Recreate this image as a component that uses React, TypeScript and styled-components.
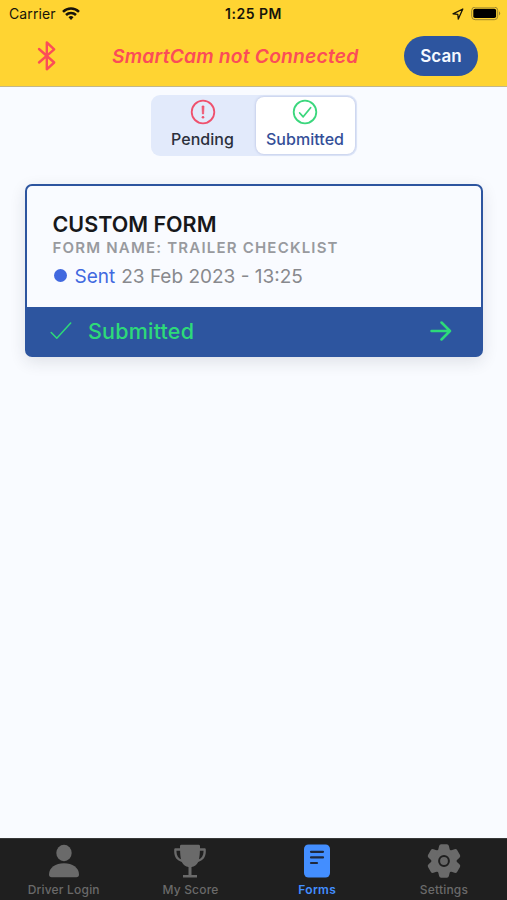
import React from 'react';
import styled, { createGlobalStyle } from 'styled-components';

const GlobalStyle = createGlobalStyle`
  * { box-sizing: border-box; }
  body { margin: 0; background: #f9fbff; font-family: Inter, sans-serif; }
  svg { display: block; flex: none; }
`;

const Screen = styled.div`
  display: flex;
  flex-direction: column;
  width: 507px;
  height: 900px;
  background: #f9fbff;
  overflow: hidden;
`;

const Header = styled.header`
  height: 87px;
  background: #ffd432;
  border-bottom: 1px solid #c3b78a;
`;

const StatusBar = styled.div`
  display: grid;
  grid-template-columns: 1fr auto 1fr;
  align-items: center;
  height: 27px;
  padding: 0 6px 0 9px;
  color: #17140a;
  font-size: 14px;
  line-height: 27px;
`;

const Carrier = styled.div`
  display: flex;
  align-items: center;
  gap: 6px;
  letter-spacing: 0.1px;
`;

const Clock = styled.div`
  margin-left: -3px;
  font-weight: 600;
  font-size: 14px;
  letter-spacing: 0.5px;
`;

const StatusIcons = styled.div`
  display: flex;
  align-items: center;
  justify-content: flex-end;
  gap: 7px;
`;

const Toolbar = styled.div`
  display: flex;
  align-items: center;
  height: 58px;
  padding: 0 29px 0 36px;
`;

const ConnectionText = styled.div`
  flex: 1;
  padding-left: 54px;
  color: #fb4d58;
  font-size: 19.3px;
  font-style: italic;
  font-weight: 600;
  letter-spacing: 0.18px;
  white-space: nowrap;
`;

const ScanButton = styled.button`
  width: 74px;
  height: 40px;
  padding: 0;
  border: 0;
  border-radius: 20px;
  background: #2d559f;
  color: #f5f9ff;
  font: 600 17px Inter, sans-serif;
  letter-spacing: 0.1px;
`;

const Content = styled.main`
  display: flex;
  flex: 1;
  flex-direction: column;
  align-items: center;
  padding-top: 8px;
`;

const Segments = styled.div`
  display: grid;
  grid-template-columns: 102px 99px;
  gap: 2px;
  width: 206px;
  height: 61px;
  padding: 2px 2px 2px 1px;
  border-radius: 9px;
  background: #e2eafb;
`;

const Segment = styled.button<{ $selected?: boolean }>`
  display: flex;
  flex-direction: column;
  align-items: center;
  padding: 2px 0 0;
  border: 0;
  border-radius: 8px;
  background: ${({ $selected }) => ($selected ? '#ffffff' : 'transparent')};
  box-shadow: ${({ $selected }) => ($selected ? '0 0 3px #aeb7dc' : 'none')};
  color: ${({ $selected }) => ($selected ? '#344f98' : '#2b303b')};
  font: 500 16px/20px Inter, sans-serif;
  letter-spacing: 0.05px;
  gap: 4px;
`;

const Card = styled.article`
  width: 458px;
  height: 173px;
  margin: 28px 0 0 1px;
  border: 2px solid #2d559f;
  border-radius: 7px;
  background: #f9fbff;
  box-shadow: 0 5px 16px rgba(35, 40, 55, 0.12);
`;

const CardBody = styled.div`
  height: 121px;
  padding: 25px 26px 0 25.5px;
`;

const CardTitle = styled.h2`
  margin: 0;
  color: #17181b;
  font-size: 21.5px;
  font-weight: 600;
  line-height: 27px;
`;

const FormName = styled.div`
  color: #989a9e;
  font-size: 15px;
  font-weight: 600;
  line-height: 19px;
  letter-spacing: 1.2px;
`;

const SentRow = styled.div`
  display: flex;
  align-items: center;
  margin-top: 6px;
  color: #88898d;
  font-size: 19px;
  line-height: 27px;
`;

const Dot = styled.span`
  width: 13px;
  height: 13px;
  margin: -2px 8px 0 1px;
  border-radius: 50%;
  background: #4169df;
`;

const Sent = styled.span`
  margin-right: 6px;
  color: #4169df;
`;

const CardFooter = styled.div`
  display: flex;
  align-items: center;
  height: 48px;
  padding: 0 29px 0 23px;
  background: #2d559f;
  color: #2dda79;
`;

const FooterLabel = styled.span`
  flex: 1;
  padding-left: 16px;
  font-size: 21.5px;
  font-weight: 550;
  letter-spacing: 0.2px;
`;

const TabBar = styled.nav`
  display: grid;
  grid-template-columns: repeat(4, 1fr);
  height: 62px;
  border-top: 1px solid #383838;
  background: #1f1f1f;
`;

const Tab = styled.button<{ $active?: boolean }>`
  display: flex;
  flex-direction: column;
  align-items: center;
  padding: 4px 0 0 0.7px;
  border: 0;
  background: transparent;
  color: ${({ $active }) => ($active ? '#438eff' : '#6a6a6a')};
  font: ${({ $active }) => ($active ? 600 : 500)} 12px/16px Inter, sans-serif;
  letter-spacing: ${({ $active }) => ($active ? '0.3px' : '0.2px')};
  gap: 3px;
`;

const WifiIcon = () => (
  <svg width="18" height="14" viewBox="0 0 18 14" fill="none" stroke="currentColor" strokeWidth="2.5">
    <path d="M1 4.8C5.5.4 12.5.4 17 4.8" />
    <path d="M4 8C6.8 5.2 11.2 5.2 14 8" />
    <path d="M6.5 10.2Q9 8 11.5 10.2L9 13Z" fill="currentColor" stroke="none" />
  </svg>
);

const LocationIcon = () => (
  <svg width="12" height="12" viewBox="0 0 12 12" fill="none" stroke="currentColor" strokeWidth="1.3" strokeLinejoin="round">
    <path d="M10.8 1L1 5.8l4.8.5.5 4.8Z" />
  </svg>
);

const BatteryIcon = () => (
  <svg width="30" height="14" viewBox="0 0 30 14">
    <rect x=".7" y=".1" width="26" height="12.6" rx="3.4" fill="none" stroke="#9b8532" />
    <rect x="2.3" y="1.7" width="22.8" height="9.4" rx="1.8" fill="#000" />
    <path d="M28 4.3q2.4 2.1 0 4.2z" fill="#9b8532" />
  </svg>
);

const BluetoothIcon = () => (
  <svg width="22" height="32" viewBox="0 0 22 32" fill="none" stroke="#fb4d58" strokeWidth="2.4" strokeLinecap="round" strokeLinejoin="round">
    <path d="M3 9l15.2 13.5-7.4 6.8V2.5l7.4 6.8L3 22.5" />
  </svg>
);

const AlertIcon = () => (
  <svg width="26" height="26" viewBox="0 0 26 26" fill="none" stroke="#ef516d" strokeWidth="1.8">
    <circle cx="13" cy="13" r="11.3" />
    <path d="M12 7h2l-.4 8h-1.2z" fill="#ef516d" strokeWidth=".7" />
    <circle cx="13" cy="18.3" r="1.3" fill="#ef516d" stroke="none" />
  </svg>
);

const CheckCircleIcon = () => (
  <svg width="26" height="26" viewBox="0 0 26 26" fill="none" stroke="#3bd77d" strokeWidth="1.8" strokeLinecap="round" strokeLinejoin="round">
    <circle cx="13" cy="13" r="11.3" />
    <path d="M7.7 14l3.5 3.8 7.4-9" />
  </svg>
);

const CheckIcon = () => (
  <svg width="22" height="18" viewBox="0 0 22 18" fill="none" stroke="currentColor" strokeWidth="1.5" strokeLinecap="round" strokeLinejoin="round">
    <path d="M1.2 10.5l5.6 5.7L20.7 1" />
  </svg>
);

const ArrowIcon = () => (
  <svg width="22" height="20" viewBox="0 0 22 20" fill="none" stroke="currentColor" strokeWidth="2.5" strokeLinecap="round" strokeLinejoin="round">
    <path d="M1.5 10H20M11.5 1.5L20 10l-8.5 8.5" />
  </svg>
);

const PersonIcon = () => (
  <svg width="34" height="36" viewBox="0 0 34 36" fill="currentColor">
    <ellipse cx="17" cy="10" rx="7.7" ry="8.3" />
    <path d="M2 31.5C2 24.8 8.6 20.3 17 20.3s15 4.5 15 11.2c0 1.8-.9 2.7-2.7 2.7H4.7C2.9 34.2 2 33.3 2 31.5Z" />
  </svg>
);

const TrophyIcon = () => (
  <svg width="34" height="36" viewBox="0 0 34 36">
    <path d="M7 3.2Q7 1.8 8.4 1.8h17.2Q27 1.8 27 3.2v2h4.6q1.2 0 1.2 1.2v2.4c0 5.1-3 9.2-7.6 10.1-1.5 2.9-3.8 4.6-6.7 5.2V32H24v2.4H10V32h5.5v-7.9c-2.9-.6-5.2-2.3-6.7-5.2C4.2 18 1.2 13.9 1.2 8.8V6.4q0-1.2 1.2-1.2H7Z" fill="currentColor" />
    <path d="M3.5 7.7h3.6c.1 3 .3 6.2 1 8.6-2.8-1-4.6-3.8-4.6-7.5ZM26.9 7.7h3.6v1.1c0 3.7-1.8 6.5-4.6 7.5.7-2.4.9-5.6 1-8.6Z" fill="#1f1f1f" />
  </svg>
);

const FormIcon = () => (
  <svg width="34" height="36" viewBox="0 0 34 36">
    <rect x="4" y="1.5" width="26" height="33" rx="4.5" fill="currentColor" />
    <path d="M11 8.8h12M11 14.4h12M11 20h6" stroke="#1f293d" strokeWidth="2.2" strokeLinecap="round" />
  </svg>
);

const GearIcon = () => (
  <svg width="34" height="36" viewBox="0 0 34 36">
    <g fill="currentColor" transform="translate(17 18)">
      <circle r="12.6" />
      {[0, 60, 120, 180, 240, 300].map((angle) => (
        <path key={angle} transform={`rotate(${angle})`} d="M-6.2-9.5L-4.9-15q.4-1.8 2-1.8h5.8q1.6 0 2 1.8L6.2-9.5Z" />
      ))}
    </g>
    <circle cx="17" cy="18" r="4.9" fill="#666" stroke="#1f1f1f" strokeWidth="2" />
  </svg>
);

export default function App() {
  return (
    <>
      <GlobalStyle />
      <Screen>
        <Header>
          <StatusBar>
            <Carrier>Carrier <WifiIcon /></Carrier>
            <Clock>1:25 PM</Clock>
            <StatusIcons><LocationIcon /><BatteryIcon /></StatusIcons>
          </StatusBar>
          <Toolbar>
            <BluetoothIcon />
            <ConnectionText>SmartCam not Connected</ConnectionText>
            <ScanButton>Scan</ScanButton>
          </Toolbar>
        </Header>
        <Content>
          <Segments>
            <Segment><AlertIcon />Pending</Segment>
            <Segment $selected><CheckCircleIcon />Submitted</Segment>
          </Segments>
          <Card>
            <CardBody>
              <CardTitle>CUSTOM FORM</CardTitle>
              <FormName>FORM NAME: TRAILER CHECKLIST</FormName>
              <SentRow><Dot /><Sent>Sent</Sent>23 Feb 2023 - 13:25</SentRow>
            </CardBody>
            <CardFooter>
              <CheckIcon /><FooterLabel>Submitted</FooterLabel><ArrowIcon />
            </CardFooter>
          </Card>
        </Content>
        <TabBar>
          <Tab><PersonIcon />Driver Login</Tab>
          <Tab><TrophyIcon />My Score</Tab>
          <Tab $active><FormIcon />Forms</Tab>
          <Tab><GearIcon />Settings</Tab>
        </TabBar>
      </Screen>
    </>
  );
}
